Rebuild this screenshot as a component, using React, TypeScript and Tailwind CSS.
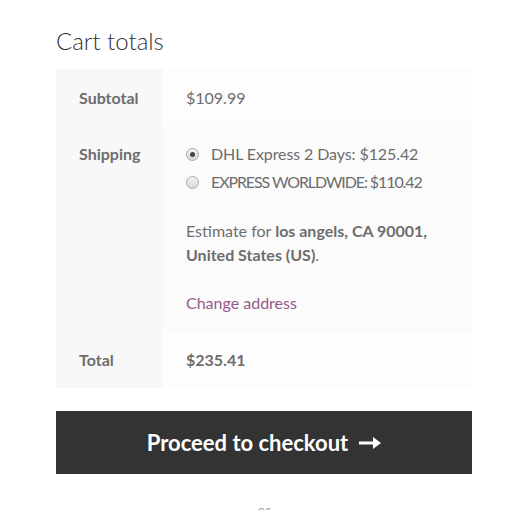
import React from 'react';

const font = { fontFamily: 'Lato, "Noto Sans", sans-serif' };

const Radio: React.FC<{ checked?: boolean }> = ({ checked }) => (
  <span className="flex h-[13px] w-[13px] shrink-0 items-center justify-center rounded-full border border-[#a9a9a9] bg-gradient-to-b from-[#f4f4f4] to-[#d8d8d8]">
    {checked && <span className="h-[5px] w-[5px] rounded-full bg-[#444]" />}
  </span>
);

export default function App() {
  return (
    <div className="min-h-[510px] bg-white text-[16px] text-[#6d6d6d]" style={font}>
      <div className="ml-[56px] w-[416px] pt-[25px]">
        <h2 className="text-[24px] font-light leading-[32px] text-[#333]">Cart totals</h2>

        <table className="mt-[12px] w-full border-collapse">
          <tbody>
            <tr>
              <th className="w-[107px] bg-[#f8f8f8] py-[16px] pl-[23px] text-left align-top font-bold leading-[25px]">
                Subtotal
              </th>
              <td className="bg-[#fdfdfd] py-[16px] pl-[23px] align-top leading-[25px]">$109.99</td>
            </tr>
            <tr>
              <th className="bg-[#f8f8f8] py-[16px] pl-[23px] text-left align-top font-bold leading-[24px]">
                Shipping
              </th>
              <td className="bg-[#fbfbfb] py-[16px] pl-[23px] align-top leading-[24px]">
                <ul className="flex flex-col gap-[4px]">
                  <li className="flex items-center gap-[12px]">
                    <Radio checked />
                    <span className="tracking-[-0.1px]">DHL Express 2 Days: $125.42</span>
                  </li>
                  <li className="flex items-center gap-[12px]">
                    <Radio />
                    <span className="tracking-[-1.1px]">EXPRESS WORLDWIDE: $110.42</span>
                  </li>
                </ul>
                <p className="mt-[25px]">
                  Estimate for <strong className="font-bold">los angels, CA 90001, United States (US)</strong>.
                </p>
                <p className="mt-[24px]">
                  <a href="#" className="text-[#96588a]">Change address</a>
                </p>
              </td>
            </tr>
            <tr>
              <th className="bg-[#f8f8f8] py-[16px] pl-[23px] text-left align-top font-bold leading-[25px]">
                Total
              </th>
              <td className="bg-[#fdfdfd] py-[16px] pl-[23px] align-top font-bold leading-[25px]">$235.41</td>
            </tr>
          </tbody>
        </table>

        <button className="mt-[23px] flex h-[63px] w-full items-center justify-center gap-[11px] bg-[#333] text-[22px] font-bold text-white">
          Proceed to checkout
          <svg width="22" height="12" viewBox="0 0 22 12" fill="white">
            <path d="M0 4.5h14V0l8 6-8 6V7.5H0z" />
          </svg>
        </button>

        <p className="mt-[26px] text-center text-[14px] leading-[20px] text-[#aaa]">or</p>
      </div>
    </div>
  );
}
